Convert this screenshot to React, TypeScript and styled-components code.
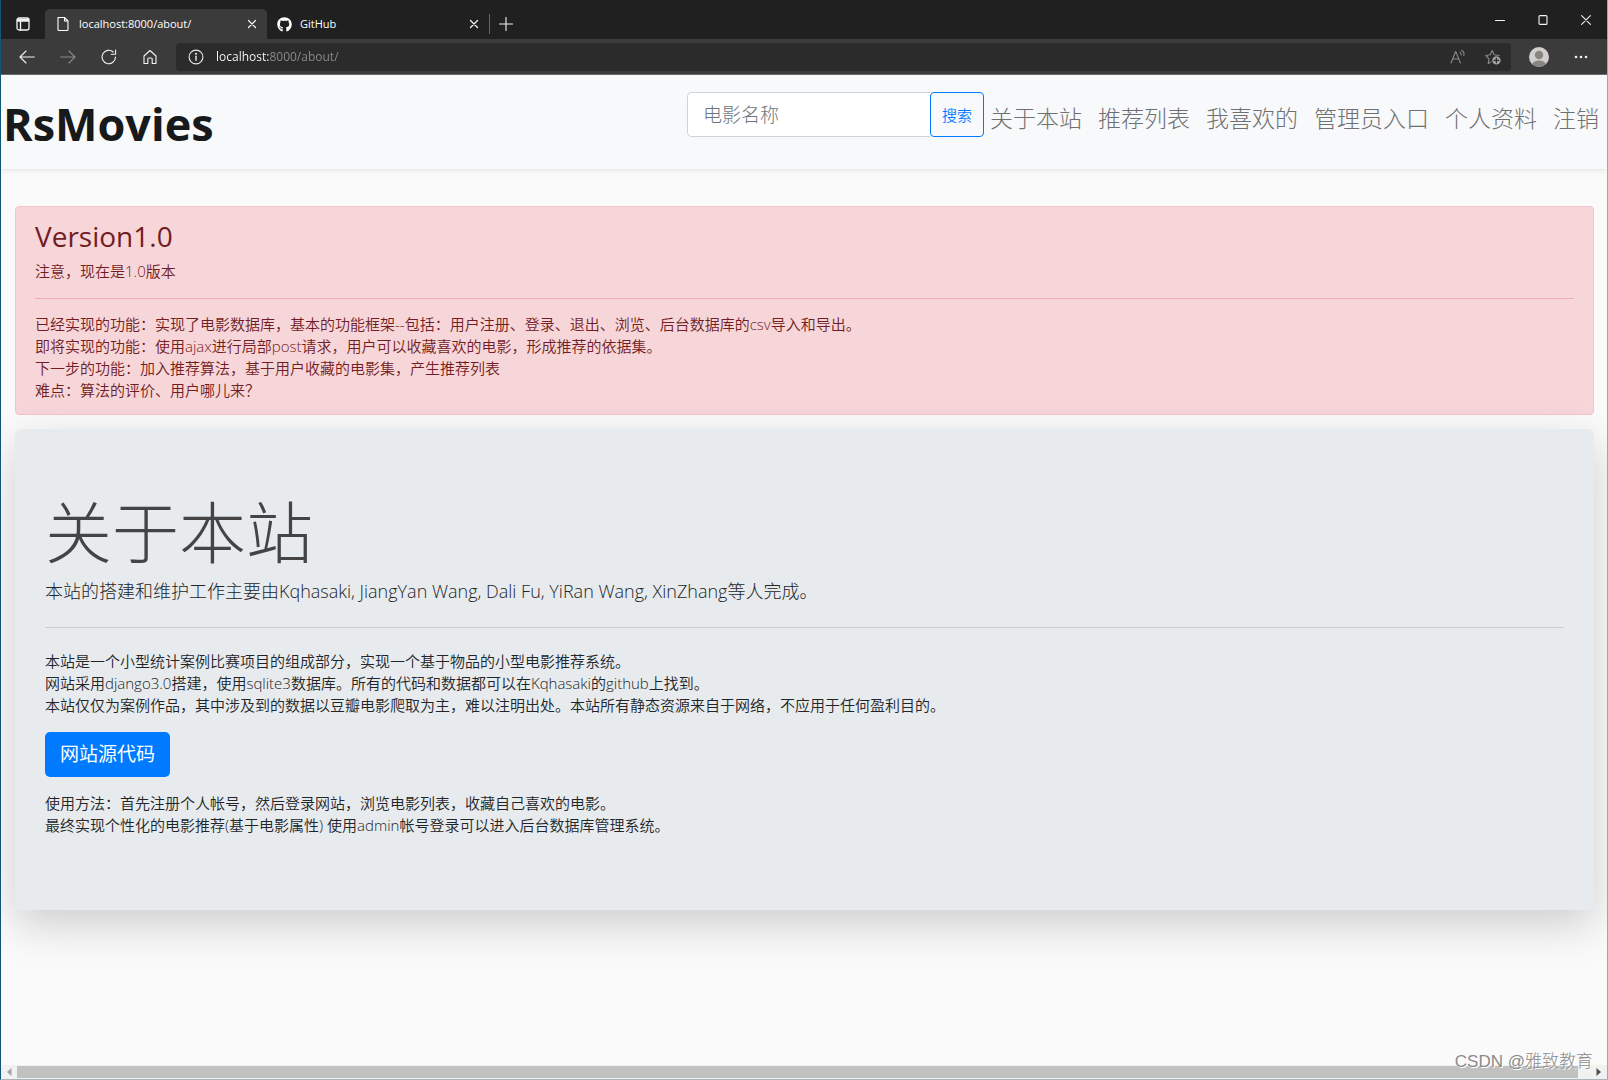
import React from "react";
import styled, { createGlobalStyle } from "styled-components";
import { FaGithub } from "react-icons/fa";

const uiFont = `"Open Sans", "Noto Sans CJK SC", sans-serif`;

const GlobalStyle = createGlobalStyle`
  *, *::before, *::after { box-sizing: border-box; }
  body {
    margin: 0;
    font-family: ${uiFont};
    font-size: 15px;
    line-height: 22px;
    color: #212529;
    background: #fafafa;
  }
  h1, h2, p { margin: 0; }
`;

/* ---------- Browser window ---------- */

const Window = styled.div`
  display: flex;
  flex-direction: column;
  height: 100vh;
  overflow: hidden;
  border-left: 1px solid #0c587c;
  border-right: 1px solid #a5a5a5;
  border-bottom: 1px solid #a9b4ba;
`;

const IconButton = styled.button<{ $width: number; $dim?: boolean }>`
  display: flex;
  align-items: center;
  justify-content: center;
  flex: none;
  width: ${(p) => p.$width}px;
  height: 30px;
  padding: 0;
  border: 0;
  background: none;
  color: ${(p) => (p.$dim ? "#8a8a8a" : "#f2f2f2")};
`;

const TabStrip = styled.div`
  display: flex;
  align-items: flex-end;
  flex: none;
  height: 39px;
  background: #202020;
`;

const Tab = styled.div<{ $active?: boolean }>`
  display: flex;
  align-items: center;
  width: 222px;
  height: 30px;
  padding-left: 10px;
  gap: 8px;
  border-radius: 5px 5px 0 0;
  background: ${(p) => (p.$active ? "#3b3b3b" : "transparent")};
  color: #fff;
  font-size: 11px;
`;

const TabTitle = styled.span`
  flex: 1;
  white-space: nowrap;
`;

const TabDivider = styled.span`
  width: 1px;
  height: 20px;
  margin-bottom: 5px;
  background: #666;
`;

const WindowControls = styled.div`
  display: flex;
  align-items: center;
  align-self: stretch;
  margin-left: auto;
`;

const Toolbar = styled.div`
  display: flex;
  align-items: center;
  flex: none;
  height: 36px;
  padding: 0 4px 0 5px;
  background: #3b3b3b;
  border-bottom: 1px solid #6b6b6b;
`;

const AddressBar = styled.label`
  display: flex;
  align-items: center;
  flex: 1;
  height: 28px;
  margin: 0 8px 0 6px;
  padding-left: 12px;
  gap: 12px;
  border-radius: 4px;
  background: #2b2b2b;
  color: #e8e8e8;
`;

const AddressInput = styled.input`
  flex: 1;
  min-width: 0;
  height: 28px;
  padding: 0;
  border: 0;
  outline: 0;
  font: 12px/28px ${uiFont};
  color: transparent;
  background: linear-gradient(to right, #fff 53px, #8c8c8c 53px);
  background-clip: text;
  -webkit-background-clip: text;
`;

const AddressActions = styled.span`
  display: flex;
`;

/* ---------- Site ---------- */

const Viewport = styled.div`
  flex: 1;
  min-height: 0;
  overflow: hidden;
  background: #fafafa;
`;

const SiteHeader = styled.header`
  display: flex;
  align-items: flex-start;
  justify-content: space-between;
  height: 94px;
  padding: 17px 8px 0 2px;
  background: #f8f9fb;
  box-shadow: 0 2px 4px rgba(0, 0, 0, 0.075);
`;

const Brand = styled.h1`
  font-size: 45px;
  line-height: 64px;
  font-weight: 700;
  color: #17191b;
`;

const HeaderTools = styled.div`
  display: flex;
`;

const SearchForm = styled.form`
  display: flex;
  height: 45px;
`;

const SearchInput = styled.input`
  width: 243px;
  padding: 0 15px;
  border: 1px solid #ced4da;
  border-right: 0;
  border-radius: 5px 0 0 5px;
  outline: 0;
  background: #fff;
  font: 300 19px ${uiFont};
  color: #495057;
  &::placeholder { color: #6c757d; opacity: 1; }
`;

const SearchButton = styled.button`
  width: 54px;
  padding: 0;
  border: 1px solid #007bff;
  border-radius: 4px;
  background: transparent;
  color: #007bff;
  font: 350 15px ${uiFont};
`;

const Nav = styled.nav`
  display: flex;
  gap: 16px;
  padding: 0 0 0 6px;
`;

const NavLink = styled.a`
  font-size: 23px;
  line-height: 52px;
  font-weight: 300;
  color: #6f7071;
  text-decoration: none;
  white-space: nowrap;
`;

const Content = styled.main`
  display: flex;
  flex-direction: column;
  gap: 14px;
  padding: 37px 13px 0 14px;
`;

const Alert = styled.section`
  padding: 11px 19px 13px;
  border: 1px solid #f5c2c9;
  border-radius: 4px;
  background: #f7d6d9;
  color: #721c24;
`;

const AlertTitle = styled.h2`
  margin-bottom: 6px;
  font-size: 28px;
  line-height: 36px;
  font-weight: 500;
`;

const Rule = styled.hr<{ $color: string; $above: number; $below: number }>`
  margin: ${(p) => p.$above}px 0 ${(p) => p.$below}px;
  border: 0;
  border-top: 1px solid ${(p) => p.$color};
`;

const Text = styled.p`
  font-weight: 350;
`;

const Jumbotron = styled.section`
  padding: 63px 30px 74px;
  border-radius: 6px;
  background: #e8ebee;
  box-shadow: 0 15px 44px rgba(0, 0, 0, 0.175);
`;

const DisplayTitle = styled.h2`
  margin-bottom: 5px;
  font-size: 67px;
  line-height: 80px;
  font-weight: 300;
  color: #444;
`;

const Lead = styled.p`
  font-size: 18px;
  line-height: 28px;
  font-weight: 300;
`;

const SourceLink = styled.a`
  display: inline-block;
  margin: 16px 0 15px;
  padding: 0 15px;
  border-radius: 5px;
  background: #007bff;
  color: #fff;
  font-size: 19px;
  line-height: 45px;
  text-decoration: none;
`;

const ScrollBar = styled.div`
  display: flex;
  align-items: center;
  justify-content: space-between;
  flex: none;
  height: 14px;
  padding: 0 5px;
  background: #f1f1f1;
`;

const ScrollThumb = styled.div`
  flex: 1;
  height: 12px;
  margin: 0 18px 0 5px;
  background: #c1c1c1;
`;

const Watermark = styled.div`
  position: absolute;
  right: 15px;
  bottom: 6px;
  font: 300 17px/24px "Liberation Sans", "Noto Sans CJK SC", sans-serif;
  color: #8a8a8a;
  text-shadow: 1px 1px 0 #fff;
`;

/* ---------- Icons ---------- */

type GlyphProps = { size?: number; children: React.ReactNode };

const Glyph = ({ size = 16, children }: GlyphProps) => (
  <svg
    width={size}
    height={size}
    viewBox={`0 0 ${size} ${size}`}
    fill="none"
    stroke="currentColor"
    strokeWidth="1.1"
    strokeLinecap="round"
    strokeLinejoin="round"
    aria-hidden="true"
  >
    {children}
  </svg>
);

const CloseGlyph = () => (
  <Glyph size={10}>
    <path d="M1.5 1.5l7 7M8.5 1.5l-7 7" strokeWidth="1.3" />
  </Glyph>
);

const links = ["关于本站", "推荐列表", "我喜欢的", "管理员入口", "个人资料", "注销"];

export default function App() {
  return (
    <Window>
      <GlobalStyle />
      <TabStrip>
        <IconButton $width={44} aria-label="标签页操作">
          <Glyph size={14}>
            <rect x="1" y="1" width="12" height="12" rx="2" strokeWidth="1.3" />
            <path d="M1.5 2.5h11M1.5 4h11M4.5 4v9" strokeWidth="1.4" />
          </Glyph>
        </IconButton>
        <Tab $active>
          <Glyph>
            <path d="M3 1.5h6.5L13 5v8.5a1 1 0 0 1-1 1H4a1 1 0 0 1-1-1zM9.5 1.5V5H13" />
          </Glyph>
          <TabTitle>localhost:8000/about/</TabTitle>
          <IconButton $width={30} aria-label="关闭标签页">
            <CloseGlyph />
          </IconButton>
        </Tab>
        <Tab>
          <FaGithub size={15} />
          <TabTitle>GitHub</TabTitle>
          <IconButton $width={30} aria-label="关闭标签页">
            <CloseGlyph />
          </IconButton>
        </Tab>
        <TabDivider />
        <IconButton $width={32} aria-label="新建标签页">
          <Glyph size={14}>
            <path d="M7 .5v13M.5 7h13" />
          </Glyph>
        </IconButton>
        <WindowControls>
          <IconButton $width={43} aria-label="最小化">
            <Glyph size={10}>
              <path d="M.5 5.5h9" />
            </Glyph>
          </IconButton>
          <IconButton $width={43} aria-label="最大化">
            <Glyph size={10}>
              <rect x="1" y=".6" width="8" height="8.8" rx="1" />
            </Glyph>
          </IconButton>
          <IconButton $width={43} aria-label="关闭">
            <Glyph size={10}>
              <path d="M.6.6l8.8 8.8M9.4.6L.6 9.4" />
            </Glyph>
          </IconButton>
        </WindowControls>
      </TabStrip>

      <Toolbar>
        <IconButton $width={41} aria-label="后退">
          <Glyph>
            <path d="M15.3 8H1M7 2L1 8l6 6" />
          </Glyph>
        </IconButton>
        <IconButton $width={41} $dim aria-label="前进">
          <Glyph>
            <path d="M.7 8H15M9 2l6 6-6 6" />
          </Glyph>
        </IconButton>
        <IconButton $width={41} aria-label="刷新">
          <Glyph>
            <path d="M14.5 8a6.7 6.7 0 1 1-2.2-5M14.6 1v4.3h-4.3" />
          </Glyph>
        </IconButton>
        <IconButton $width={41} aria-label="主页">
          <Glyph>
            <path d="M2 7l6-5.5L14 7v7.5h-3.8V10a1 1 0 0 0-1-1H6.8a1 1 0 0 0-1 1v4.5H2z" />
          </Glyph>
        </IconButton>
        <AddressBar>
          <Glyph>
            <circle cx="8" cy="8" r="6.9" />
            <path d="M8 7.2v4" strokeWidth="1.4" />
            <circle cx="8" cy="4.8" r=".5" fill="currentColor" />
          </Glyph>
          <AddressInput aria-label="地址" defaultValue="localhost:8000/about/" />
          <AddressActions>
            <IconButton $width={34} $dim aria-label="大声朗读">
              <Glyph>
                <path d="M1 14L5.7 2.5 10.4 14M2.7 10h6M10 3.2c1 .6 1.4 1.6 1.2 2.8M11.5 1.3c2 1 2.8 3 2.4 5.2" />
              </Glyph>
            </IconButton>
            <IconButton $width={36} $dim aria-label="添加到收藏夹">
              <Glyph>
                <path d="M6 13L3.2 14.4 4 9.8.8 6.5l4.4-.7L7.2 1.5l2 4.3 5 .7" />
                <circle cx="11.4" cy="11.4" r="4.2" fill="#a0a0a0" stroke="none" />
                <path d="M11.4 9.2v4.4M9.2 11.4h4.4" stroke="#2b2b2b" strokeWidth="1.2" />
              </Glyph>
            </IconButton>
          </AddressActions>
        </AddressBar>
        <IconButton $width={40} aria-label="个人资料">
          <svg width="20" height="20" viewBox="0 0 20 20" aria-hidden="true">
            <clipPath id="avatar">
              <circle cx="10" cy="10" r="10" />
            </clipPath>
            <g clipPath="url(#avatar)">
              <rect width="20" height="20" fill="#d1cfcd" />
              <circle cx="10" cy="8" r="4.2" fill="#88847f" />
              <ellipse cx="10" cy="18" rx="7" ry="4.6" fill="#88847f" />
            </g>
          </svg>
        </IconButton>
        <IconButton $width={44} aria-label="设置及其他">
          <Glyph>
            <g fill="currentColor" stroke="none">
              <circle cx="3" cy="8" r="1.3" />
              <circle cx="8" cy="8" r="1.3" />
              <circle cx="13" cy="8" r="1.3" />
            </g>
          </Glyph>
        </IconButton>
      </Toolbar>

      <Viewport>
        <SiteHeader>
          <Brand>RsMovies</Brand>
          <HeaderTools>
            <SearchForm onSubmit={(e) => e.preventDefault()}>
              <SearchInput aria-label="电影名称" placeholder="电影名称" />
              <SearchButton type="submit">搜索</SearchButton>
            </SearchForm>
            <Nav>
              {links.map((label) => (
                <NavLink key={label} href="#">
                  {label}
                </NavLink>
              ))}
            </Nav>
          </HeaderTools>
        </SiteHeader>

        <Content>
          <Alert>
            <AlertTitle>Version1.0</AlertTitle>
            <Text>注意，现在是1.0版本</Text>
            <Rule $color="#f1a9b4" $above={16} $below={14} />
            <Text>
              已经实现的功能：实现了电影数据库，基本的功能框架--包括：用户注册、登录、退出、浏览、后台数据库的csv导入和导出。
              <br />
              即将实现的功能：使用ajax进行局部post请求，用户可以收藏喜欢的电影，形成推荐的依据集。
              <br />
              下一步的功能：加入推荐算法，基于用户收藏的电影集，产生推荐列表
              <br />
              难点：算法的评价、用户哪儿来？
            </Text>
          </Alert>

          <Jumbotron>
            <DisplayTitle>关于本站</DisplayTitle>
            <Lead>
              本站的搭建和维护工作主要由Kqhasaki, JiangYan Wang, Dali Fu, YiRan Wang, XinZhang等人完成。
            </Lead>
            <Rule $color="#cccfd2" $above={22} $below={22} />
            <Text>
              本站是一个小型统计案例比赛项目的组成部分，实现一个基于物品的小型电影推荐系统。
              <br />
              网站采用django3.0搭建，使用sqlite3数据库。所有的代码和数据都可以在Kqhasaki的github上找到。
              <br />
              本站仅仅为案例作品，其中涉及到的数据以豆瓣电影爬取为主，难以注明出处。本站所有静态资源来自于网络，不应用于任何盈利目的。
            </Text>
            <SourceLink href="#">网站源代码</SourceLink>
            <Text>
              使用方法：首先注册个人帐号，然后登录网站，浏览电影列表，收藏自己喜欢的电影。
              <br />
              最终实现个性化的电影推荐(基于电影属性) 使用admin帐号登录可以进入后台数据库管理系统。
            </Text>
          </Jumbotron>
        </Content>
      </Viewport>

      <ScrollBar>
        <svg width="6" height="8" viewBox="0 0 6 8" aria-hidden="true">
          <path d="M5.5 0v8L1 4z" fill="#a3a3a3" />
        </svg>
        <ScrollThumb />
        <svg width="6" height="8" viewBox="0 0 6 8" aria-hidden="true">
          <path d="M.5 0v8L5 4z" fill="#505050" />
        </svg>
      </ScrollBar>
      <Watermark>CSDN @雅致教育</Watermark>
    </Window>
  );
}
